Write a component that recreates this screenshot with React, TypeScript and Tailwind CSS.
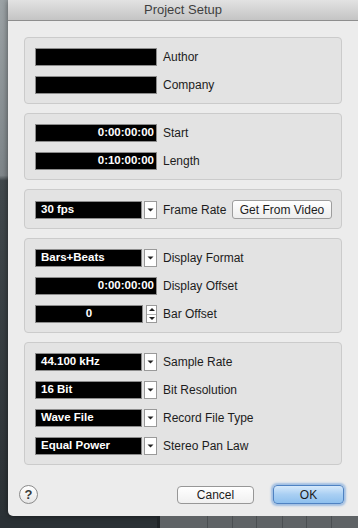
import type { ReactNode } from "react";

function Group({ children }: { children: ReactNode }) {
  return (
    <div className="flex flex-col gap-[10px] rounded-[4px] border border-[#cbcbcb] bg-[#e3e3e3] pt-[10px] pr-[9px] pb-[9px] pl-[10px]">
      {children}
    </div>
  );
}

function Box({ value, align = "left", w }: { value?: string; align?: "left" | "right" | "center"; w: string }) {
  const a = align === "right" ? "justify-end pr-[2px]" : align === "center" ? "justify-center" : "justify-start pl-[5px]";
  return (
    <div className={`flex h-[18px] items-center border border-[#8c8c8c] bg-black text-[11.5px] font-bold text-white ${w} ${a}`}>
      {value}
    </div>
  );
}

function Label({ children }: { children: ReactNode }) {
  return <span className="ml-[6px] text-[12px] text-[#1c1c1c]">{children}</span>;
}

function TextRow({ value, label, align }: { value?: string; label: string; align?: "left" | "right" }) {
  return (
    <div className="flex items-center">
      <Box value={value} align={align} w="w-[122px]" />
      <Label>{label}</Label>
    </div>
  );
}

function DropRow({ value, label, extra }: { value: string; label: string; extra?: ReactNode }) {
  return (
    <div className="flex items-center">
      <Box value={value} w="w-[107px]" />
      <div className="ml-[2px] flex h-[18px] w-[13px] items-center justify-center border border-[#9a9a9a] bg-white">
        <svg width="7" height="4" viewBox="0 0 7 4">
          <path d="M0.5 0.5 L6.5 0.5 L3.5 3.5 Z" fill="#222" />
        </svg>
      </div>
      <Label>{label}</Label>
      {extra}
    </div>
  );
}

export default function App() {
  return (
    <div className="relative flex h-[528px] w-[358px] flex-col overflow-hidden bg-[#2b3135] font-['Liberation_Sans',Arial,sans-serif]">
      <div className="flex h-[516px]">
        <div className="w-[8px] bg-[linear-gradient(to_bottom,#9ca3a6_0%,#7f868a_34%,#42494d_35%,#2c3236_100%)]" />
        <div className="flex flex-1 flex-col rounded-bl-[5px] bg-[#ececec] shadow-[0_0_6px_rgba(0,0,0,0.5)]">
          <div className="flex h-[21px] items-center justify-center border-b border-[#8e8e8e] bg-[linear-gradient(to_bottom,#e2e2e2,#c4c4c4)] text-[13px] text-[#3f3f3f]">
            Project Setup
          </div>

          <div className="flex flex-col gap-[9px] px-[16px] pt-[16px]">
            <Group>
              <TextRow label="Author" />
              <TextRow label="Company" />
            </Group>

            <Group>
              <TextRow value="0:00:00:00" label="Start" align="right" />
              <TextRow value="0:10:00:00" label="Length" align="right" />
            </Group>

            <Group>
              <DropRow
                value="30 fps"
                label="Frame Rate"
                extra={
                  <button className="ml-auto flex h-[19px] w-[100px] items-center justify-center rounded-[3px] border border-[#9d9d9d] bg-[linear-gradient(to_bottom,#ffffff,#ededed)] text-[12px] text-[#1c1c1c]">
                    Get From Video
                  </button>
                }
              />
            </Group>

            <Group>
              <DropRow value="Bars+Beats" label="Display Format" />
              <TextRow value="0:00:00:00" label="Display Offset" align="right" />
              <div className="flex items-center">
                <Box value="0" align="center" w="w-[108px]" />
                <div className="ml-[3px] flex h-[18px] w-[11px] flex-col border border-[#9a9a9a] bg-white">
                  <div className="flex flex-1 items-center justify-center border-b border-[#b5b5b5]">
                    <svg width="6" height="3" viewBox="0 0 6 3">
                      <path d="M0 3 L6 3 L3 0 Z" fill="#222" />
                    </svg>
                  </div>
                  <div className="flex flex-1 items-center justify-center">
                    <svg width="6" height="3" viewBox="0 0 6 3">
                      <path d="M0 0 L6 0 L3 3 Z" fill="#222" />
                    </svg>
                  </div>
                </div>
                <Label>Bar Offset</Label>
              </div>
            </Group>

            <Group>
              <DropRow value="44.100 kHz" label="Sample Rate" />
              <DropRow value="16 Bit" label="Bit Resolution" />
              <DropRow value="Wave File" label="Record File Type" />
              <DropRow value="Equal Power" label="Stereo Pan Law" />
            </Group>
          </div>

          <div className="mt-[20px] flex items-center pl-[11px] pr-[14px]">
            <div className="flex h-[19px] w-[19px] items-center justify-center rounded-full border border-[#8a8a8a] bg-[linear-gradient(to_bottom,#ffffff,#e6e6e6)] text-[13px] font-bold text-[#3a3a3a]">
              ?
            </div>
            <button className="ml-auto flex h-[18px] w-[77px] items-center justify-center rounded-[4px] border border-[#979797] bg-[linear-gradient(to_bottom,#ffffff,#f0f0f0)] text-[12px] text-[#1c1c1c]">
              Cancel
            </button>
            <button className="ml-[19px] flex h-[19px] w-[71px] items-center justify-center rounded-[4px] border border-[#4f82c2] bg-[linear-gradient(to_bottom,#d6e9fb,#a9cff3_50%,#8ec0ee)] text-[12px] text-[#1c1c1c] shadow-[0_0_2px_2px_rgba(110,160,220,0.6)]">
              OK
            </button>
          </div>
        </div>
      </div>

      <div className="flex h-[12px]">
        <div className="w-[157px]" />
        <div className="flex flex-1 border-l-[3px] border-[#1f2427] bg-[#5f6366]">
          <div className="w-[48px] border-r border-[#4b4f52]" />
          <div className="w-[25px] border-r border-[#4b4f52]" />
          <div className="w-[24px] border-r border-[#4b4f52]" />
          <div className="w-[26px] border-r border-[#4b4f52]" />
          <div className="w-[24px] border-r border-[#4b4f52]" />
          <div className="w-[25px] border-r border-[#4b4f52]" />
        </div>
      </div>
    </div>
  );
}
